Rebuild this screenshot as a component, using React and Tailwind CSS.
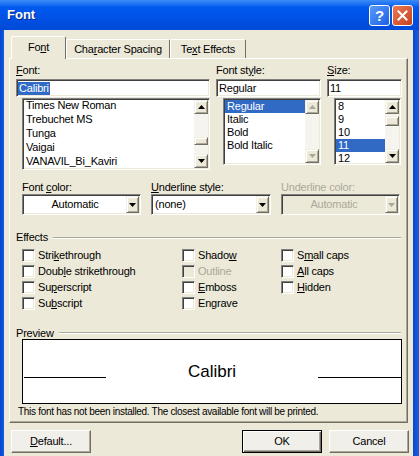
import React from 'react'

// classic 3D borders
const sunken = 'border border-t-[#808080] border-l-[#808080] border-b-white border-r-white p-px shadow-[inset_1px_1px_0_#404040,inset_-1px_-1px_0_#ece9d8]'
const raised = 'border border-t-[#f1efe2] border-l-[#f1efe2] border-b-[#716f64] border-r-[#716f64] bg-[#ece9d8] shadow-[inset_1px_1px_0_#ffffff,inset_-1px_-1px_0_#aca899]'

const fonts = ['Times New Roman', 'Trebuchet MS', 'Tunga', 'Vaigai', 'VANAVIL_Bi_Kaviri']
const styles = ['Regular', 'Italic', 'Bold', 'Bold Italic']
const sizes = ['8', '9', '10', '11', '12']

function Arrow({ up, disabled }) {
    const fill = disabled ? '#aca899' : '#000'
    return (
        <svg width="7" height="4" viewBox="0 0 7 4">
            <path d={up ? 'M3.5 0L7 4H0z' : 'M0 0h7L3.5 4z'} fill={fill} />
        </svg>
    )
}

function ScrollBar({ disabled, thumbTop, thumbH }) {
    return (
        <div className="w-[14px] flex flex-col bg-[#f5f4ef]">
            <div className={`h-[14px] flex items-center justify-center ${raised}`}>
                <Arrow up disabled={disabled} />
            </div>
            <div className="flex-1">
                {!disabled && (
                    <div className={`w-full ${raised}`} style={{ marginTop: thumbTop, height: thumbH }} />
                )}
            </div>
            <div className={`h-[14px] flex items-center justify-center ${raised}`}>
                <Arrow disabled={disabled} />
            </div>
        </div>
    )
}

function Key({ children }) {
    return <span className="underline underline-offset-[1px]">{children}</span>
}

function Combo({ text, center, disabled, w }) {
    return (
        <div className={`h-[21px] flex ${sunken} ${disabled ? 'bg-[#ece9d8]' : 'bg-white'}`} style={{ width: w }}>
            <div className={`flex-1 flex items-center ${center ? 'justify-center' : 'pl-[2px]'} ${disabled ? 'text-[#aca899]' : ''}`}>
                {text}
            </div>
            <div className={`w-[13px] flex items-center justify-center ${raised}`}>
                <Arrow disabled={disabled} />
            </div>
        </div>
    )
}

function Check({ label, disabled }) {
    return (
        <div className="h-[16px] flex items-center gap-[3px]">
            <div className={`w-[13px] h-[13px] ${sunken} ${disabled ? 'bg-[#ece9d8]' : 'bg-white'}`} />
            <span className={disabled ? 'text-[#aca899]' : ''}>{label}</span>
        </div>
    )
}

function Btn({ children, primary }) {
    const cls = primary
        ? 'border border-black shadow-[inset_1px_1px_0_#ffffff,inset_-1px_-1px_0_#716f64,inset_-2px_-2px_0_#aca899]'
        : 'border border-t-white border-l-white border-b-[#716f64] border-r-[#716f64] shadow-[inset_-1px_-1px_0_#aca899]'
    return (
        <div className={`w-[80px] h-[23px] flex items-center justify-center bg-[#f0efe9] ${cls}`}>
            {children}
        </div>
    )
}

function TitleBar() {
    return (
        <div className="h-[30px] flex items-center pl-[7px] pr-[6px] bg-linear-to-b from-[#3b8cf7] via-[#0058ee] via-25% to-[#004ad8]">
            <span className="flex-1 text-white font-bold text-[13px] tracking-normal [text-shadow:1px_1px_0_#0a2a8a]">Font</span>
            <div className="flex gap-[2px]">
                <div className="w-[21px] h-[21px] rounded-[3px] border border-white flex items-center justify-center bg-linear-to-br from-[#5a9af8] to-[#1a5fe6] text-white font-bold text-[15px] leading-none">?</div>
                <div className="w-[21px] h-[21px] rounded-[3px] border border-white flex items-center justify-center bg-linear-to-br from-[#ea7a55] to-[#c8401a]">
                    <svg width="11" height="11" viewBox="0 0 11 11">
                        <path d="M1.5 1.5l8 8M9.5 1.5l-8 8" stroke="#fff" strokeWidth="2" strokeLinecap="square" />
                    </svg>
                </div>
            </div>
        </div>
    )
}

export default function App() {
    return (
        <div className="w-[419px] h-[456px] overflow-hidden flex flex-col bg-[#0a50e0] font-['Liberation_Sans',Arial,sans-serif] text-[11px] tracking-[-0.2px] text-black select-none">
            <TitleBar />
            <div className="flex-1 flex">
                <div className="w-[4px] bg-linear-to-r from-[#0a46c8] to-[#0c5be8]" />
                <div className="w-[409px] bg-[#ece9d8] flex flex-col">
                    <div className="pl-[5px] pt-[6px]">
                        {/* Tabs */}
                        <div className="h-[22px] flex items-end pl-[2px]">
                            <div className="relative z-10 -mb-px w-[55px] h-[23px] bg-[#ece9d8] border-t border-l border-t-white border-l-white border-r border-r-[#716f64] rounded-t-[2px] flex items-center justify-center pb-[1px]">
                                Fo<Key>n</Key>t
                            </div>
                            <div className="w-[104px] h-[19px] border-t border-l border-t-white border-l-white border-r border-r-[#716f64] rounded-t-[2px] flex items-center justify-center">
                                Cha<Key>r</Key>acter Spacing
                            </div>
                            <div className="w-[76px] h-[19px] border-t border-l border-t-white border-l-white border-r border-r-[#716f64] rounded-t-[2px] flex items-center justify-center">
                                Te<Key>x</Key>t Effects
                            </div>
                        </div>

                        {/* Tab panel */}
                        <div className="w-[399px] h-[365px] border border-t-white border-l-white border-r-[#716f64] border-b-[#716f64] shadow-[inset_-1px_-1px_0_#aca899] flex flex-col pl-[6px] pr-[5px] pt-[5px]">
                            <div className="flex gap-[6px]">
                                <div className="w-[194px] flex flex-col">
                                    <div className="h-[13px] leading-[13px]"><Key>F</Key>ont:</div>
                                    <div className={`mt-[2px] h-[18px] bg-white flex items-center pl-[1px] ${sunken}`}>
                                        <span className="bg-[#316ac5] text-white px-px leading-[13px]">Calibri</span>
                                    </div>
                                    <div className={`mt-px ml-[6px] h-[72px] bg-white flex ${sunken}`}>
                                        <div className="flex-1 overflow-hidden">
                                            <div className="-mt-[2px]">
                                                {fonts.map(f => (
                                                    <div key={f} className="h-[14px] leading-[14px] pl-[2px]">{f}</div>
                                                ))}
                                            </div>
                                        </div>
                                        <ScrollBar thumbTop={23} thumbH={8} />
                                    </div>
                                </div>
                                <div className="w-[105px] flex flex-col">
                                    <div className="h-[13px] leading-[13px]">Font st<Key>y</Key>le:</div>
                                    <div className={`mt-[2px] h-[18px] bg-white flex items-center pl-[2px] ${sunken}`}>Regular</div>
                                    <div className={`mt-px ml-[7px] h-[67px] bg-white flex ${sunken}`}>
                                        <div className="flex-1 overflow-hidden">
                                            {styles.map(s => (
                                                <div key={s} className={`h-[13px] leading-[13px] pl-[2px] ${s === 'Regular' ? 'bg-[#316ac5] text-white' : ''}`}>{s}</div>
                                            ))}
                                        </div>
                                        <ScrollBar disabled />
                                    </div>
                                </div>
                                <div className="w-[75px] flex flex-col">
                                    <div className="h-[13px] leading-[13px]"><Key>S</Key>ize:</div>
                                    <div className={`mt-[2px] h-[18px] bg-white flex items-center pl-[2px] ${sunken}`}>11</div>
                                    <div className={`mt-px ml-[7px] mr-px h-[67px] bg-white flex ${sunken}`}>
                                        <div className="flex-1 overflow-hidden">
                                            {sizes.map(s => (
                                                <div key={s} className={`h-[13px] leading-[13px] pl-[2px] ${s === '11' ? 'bg-[#316ac5] text-white' : ''}`}>{s}</div>
                                            ))}
                                        </div>
                                        <ScrollBar thumbTop={2} thumbH={10} />
                                    </div>
                                </div>
                            </div>

                            {/* Colour / underline */}
                            <div className="mt-[11px] ml-[6px] flex gap-[10px]">
                                <div className="flex flex-col">
                                    <div className="h-[13px] leading-[13px]">Font <Key>c</Key>olor:</div>
                                    <Combo text="Automatic" center w={119} />
                                </div>
                                <div className="flex flex-col">
                                    <div className="h-[13px] leading-[13px]"><Key>U</Key>nderline style:</div>
                                    <Combo text="(none)" w={120} />
                                </div>
                                <div className="flex flex-col">
                                    <div className="h-[13px] leading-[13px] text-[#aca899]">Underline color:</div>
                                    <Combo text="Automatic" center disabled w={119} />
                                </div>
                            </div>

                            {/* Effects */}
                            <div className="mt-[16px] h-[13px] flex items-center gap-[5px] mr-px">
                                <span>Effects</span>
                                <div className="flex-1 h-[2px] border-t border-t-[#aca899] border-b border-b-white" />
                            </div>
                            <div className="mt-[3px] ml-[6px] flex">
                                <div className="w-[160px] flex flex-col">
                                    <Check label={<>Stri<Key>k</Key>ethrough</>} />
                                    <Check label={<>Doub<Key>l</Key>e strikethrough</>} />
                                    <Check label={<>Su<Key>p</Key>erscript</>} />
                                    <Check label={<>Su<Key>b</Key>script</>} />
                                </div>
                                <div className="w-[99px] flex flex-col">
                                    <Check label={<>Shado<Key>w</Key></>} />
                                    <Check label="Outline" disabled />
                                    <Check label={<><Key>E</Key>mboss</>} />
                                    <Check label={<>En<Key>g</Key>rave</>} />
                                </div>
                                <div className="flex flex-col">
                                    <Check label={<>S<Key>m</Key>all caps</>} />
                                    <Check label={<><Key>A</Key>ll caps</>} />
                                    <Check label={<><Key>H</Key>idden</>} />
                                </div>
                            </div>

                            {/* Preview */}
                            <div className="mt-[16px] h-[12px] flex items-center gap-[5px] mr-px">
                                <span>Preview</span>
                                <div className="flex-1 h-[2px] border-t border-t-[#aca899] border-b border-b-white" />
                            </div>
                            <div className="ml-[6px] w-[380px] h-[65px] bg-white border border-black flex">
                                <div className="ml-px mt-[37px] w-[82px] h-px bg-black" />
                                <div className="flex-1 text-center mt-[23px] text-[17px] leading-[17px] tracking-normal">Calibri</div>
                                <div className="mt-[37px] w-[83px] h-px bg-black" />
                            </div>
                            <div className="mt-[2px] ml-[2px] text-[10px] leading-[12px] tracking-[-0.3px]">
                                This font has not been installed. The closest available font will be printed.
                            </div>
                        </div>
                    </div>

                    {/* Buttons */}
                    <div className="mt-[7px] pl-[7px] pr-[4px] flex">
                        <Btn><span><Key>D</Key>efault...</span></Btn>
                        <div className="flex-1" />
                        <Btn primary>OK</Btn>
                        <div className="w-[7px]" />
                        <Btn>Cancel</Btn>
                    </div>
                </div>
                <div className="flex-1 bg-linear-to-r from-[#0a48cc] to-[#1c5ee0]" />
            </div>
        </div>
    )
}
